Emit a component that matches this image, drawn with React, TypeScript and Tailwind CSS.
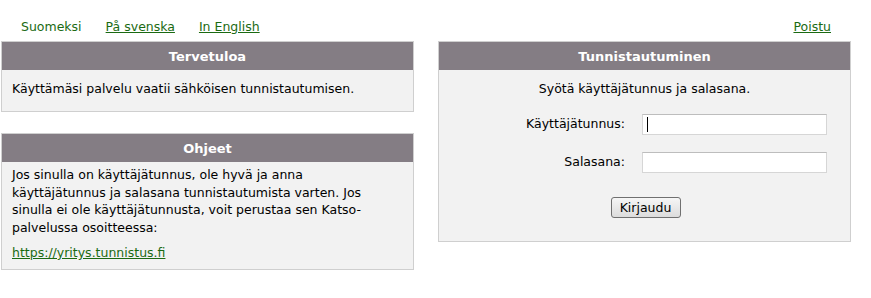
import React from 'react';

const Panel: React.FC<{ title: string; className?: string; children: React.ReactNode }> = ({ title, className = '', children }) => (
    <div className={`border border-[#cfcfcf] bg-[#f2f2f2] ${className}`}>
        <div className="h-[28px] bg-[#847d84] text-white font-bold text-[13px] text-center leading-[29px]">{title}</div>
        {children}
    </div>
);

export default function App() {
    return (
        <div className="w-[871px] h-[298px] bg-white text-[12.5px] text-black font-['DejaVu_Sans',Verdana,sans-serif]">
            <div className="flex items-center h-[41px] pt-[13px] pl-[21px] pr-[40px] text-[#1b6a12]">
                <span>Suomeksi</span>
                <a className="underline ml-[24px]">På svenska</a>
                <a className="underline ml-[24px]">In English</a>
                <a className="underline ml-auto">Poistu</a>
            </div>
            <div className="flex gap-[24px] pl-[1px]">
                <div className="w-[413px] flex flex-col gap-[21px]">
                    <Panel title="Tervetuloa">
                        <p className="px-[10px] pt-[10px] pb-[13px] leading-[18px]">Käyttämäsi palvelu vaatii sähköisen tunnistautumisen.</p>
                    </Panel>
                    <Panel title="Ohjeet">
                        <div className="px-[10px] pt-[4px] pb-[7px] leading-[17.5px]">
                            <p className="w-[368px]">Jos sinulla on käyttäjätunnus, ole hyvä ja anna käyttäjätunnus ja salasana tunnistautumista varten. Jos sinulla ei ole käyttäjätunnusta, voit perustaa sen Katso-palvelussa osoitteessa:</p>
                            <a className="block mt-[8px] underline text-[#1b6a12]">https://yritys.tunnistus.fi</a>
                        </div>
                    </Panel>
                </div>
                <Panel title="Tunnistautuminen" className="w-[413px] h-[201px]">
                    <p className="text-center pt-[10px] leading-[18px]">Syötä käyttäjätunnus ja salasana.</p>
                    <div className="grid grid-cols-[186px_185px] gap-x-[17px] gap-y-[17px] mt-[16px] items-center">
                        <label className="text-right">Käyttäjätunnus:</label>
                        <div className="h-[21px] bg-white border border-[#d6d6d6] border-t-[#bdbdbd] flex items-center pl-[4px]">
                            <span className="w-[1px] h-[15px] bg-black" />
                        </div>
                        <label className="text-right">Salasana:</label>
                        <div className="h-[21px] bg-white border border-[#d6d6d6] border-t-[#bdbdbd]" />
                    </div>
                    <div className="flex justify-center mt-[24px] pl-[2px]">
                        <button className="h-[21px] w-[70px] rounded-[3px] border border-[#707070] bg-gradient-to-b from-[#f6f6f6] to-[#dcdcdc] leading-[19px]">Kirjaudu</button>
                    </div>
                </Panel>
            </div>
        </div>
    );
}
